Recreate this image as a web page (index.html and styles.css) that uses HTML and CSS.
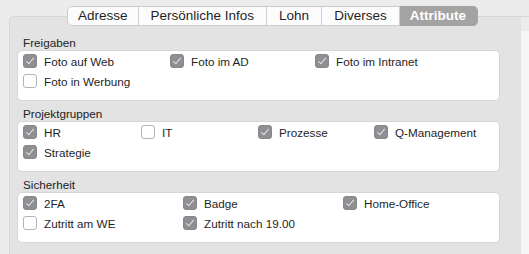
FILE: index.html
```html
<!DOCTYPE html>
<html lang="de">
<head>
  <meta charset="UTF-8" />
  <title>Attribute</title>
  <link rel="stylesheet" href="styles.css">
</head>
<body>
  <div class="window">
    <div class="main">
      <!-- Tabs -->
      <div class="tabs">
        <div class="tab">Adresse</div>
        <div class="tab">Persönliche Infos</div>
        <div class="tab">Lohn</div>
        <div class="tab">Diverses</div>
        <div class="tab selected">Attribute</div>
      </div>

      <div class="panel">
        <!-- Freigaben -->
        <div class="group">
          <div class="group-title">Freigaben</div>
          <div class="group-box cols-freigaben">
            <label class="check"><span class="box checked"></span>Foto auf Web</label>
            <label class="check"><span class="box checked"></span>Foto im AD</label>
            <label class="check"><span class="box checked"></span>Foto im Intranet</label>
            <label class="check"><span class="box"></span>Foto in Werbung</label>
          </div>
        </div>

        <!-- Projektgruppen -->
        <div class="group">
          <div class="group-title">Projektgruppen</div>
          <div class="group-box cols-projekt">
            <label class="check"><span class="box checked"></span>HR</label>
            <label class="check"><span class="box"></span>IT</label>
            <label class="check"><span class="box checked"></span>Prozesse</label>
            <label class="check"><span class="box checked"></span>Q-Management</label>
            <label class="check"><span class="box checked"></span>Strategie</label>
          </div>
        </div>

        <!-- Sicherheit -->
        <div class="group">
          <div class="group-title">Sicherheit</div>
          <div class="group-box cols-sicherheit">
            <label class="check"><span class="box checked"></span>2FA</label>
            <label class="check"><span class="box checked"></span>Badge</label>
            <label class="check"><span class="box checked"></span>Home-Office</label>
            <label class="check"><span class="box"></span>Zutritt am WE</label>
            <label class="check"><span class="box checked"></span>Zutritt nach 19.00</label>
          </div>
        </div>
      </div>
    </div>
    <div class="side"></div>
  </div>
</body>
</html>
```
FILE: styles.css
```css
body {
  margin: 0;
  padding: 0;
  background-color: #ececec;
  font-family: "Liberation Sans", Arial, sans-serif;
  color: #1f1f1f;
  overflow: hidden;
}

.window {
  display: flex;
  width: 529px;
  height: 254px;
}

.main {
  width: 521px;
  display: flex;
  flex-direction: column;
}

.side {
  flex: 1;
  margin-top: 16px;
  border-top: 1px solid #d9d9d9;
  background: linear-gradient(#ececec 0, #ececec 14px, #f6f6f6 14px);
}

/* Tabs */
.tabs {
  display: flex;
  margin: 6px 0 -10px 67px;
  position: relative;
  z-index: 1;
}

.tab {
  height: 18px;
  line-height: 18px;
  padding: 0 12px;
  font-size: 13.5px;
  background-color: #fcfcfc;
  border: 1px solid #cbcbcb;
  border-left: none;
  color: #1f1f1f;
}

.tab:first-child {
  border-left: 1px solid #cbcbcb;
  border-radius: 5px 0 0 5px;
  padding: 0 10px;
}

.tab.selected {
  background-color: #a3a3a3;
  border-color: #a3a3a3;
  color: #ffffff;
  font-weight: bold;
  border-radius: 0 5px 5px 0;
  padding: 0 11px 0 10px;
}

/* Panel */
.panel {
  flex: 1;
  margin-left: 9px;
  background-color: #e3e3e3;
  border: 1px solid #d6d6d6;
  border-bottom: none;
  border-right: none;
  border-radius: 5px 0 0 0;
  padding: 19px 21px 0 7px;
  display: flex;
  flex-direction: column;
  gap: 6px;
}

.group-title {
  font-size: 11.7px;
  line-height: 14px;
  padding-left: 6px;
  color: #222;
}

.group-box {
  height: 49px;
  background-color: #ffffff;
  border: 1px solid #d7d7d7;
  border-radius: 5px;
  padding: 0 0 0 5px;
  display: grid;
  grid-auto-rows: 20px;
  align-content: start;
}

.cols-freigaben {
  grid-template-columns: 147px 145px 1fr;
}

.cols-projekt {
  grid-template-columns: 118px 117px 116px 1fr;
}

.cols-sicherheit {
  grid-template-columns: 160px 160px 1fr;
}

/* Checkboxes */
.check {
  display: flex;
  align-items: center;
  gap: 7px;
  font-size: 11.7px;
  color: #1f1f1f;
}

.box {
  width: 12px;
  height: 12px;
  border: 1px solid #b4b4b4;
  border-radius: 3px;
  background-color: #ffffff;
  position: relative;
  flex-shrink: 0;
}

.box.checked {
  background-color: #8e8e93;
  border-color: #86868b;
}

.box.checked::after {
  content: "";
  position: absolute;
  left: 4px;
  top: 1px;
  width: 3px;
  height: 7px;
  border: solid #e6e6e6;
  border-width: 0 1.2px 1.2px 0;
  transform: rotate(40deg);
}
```
